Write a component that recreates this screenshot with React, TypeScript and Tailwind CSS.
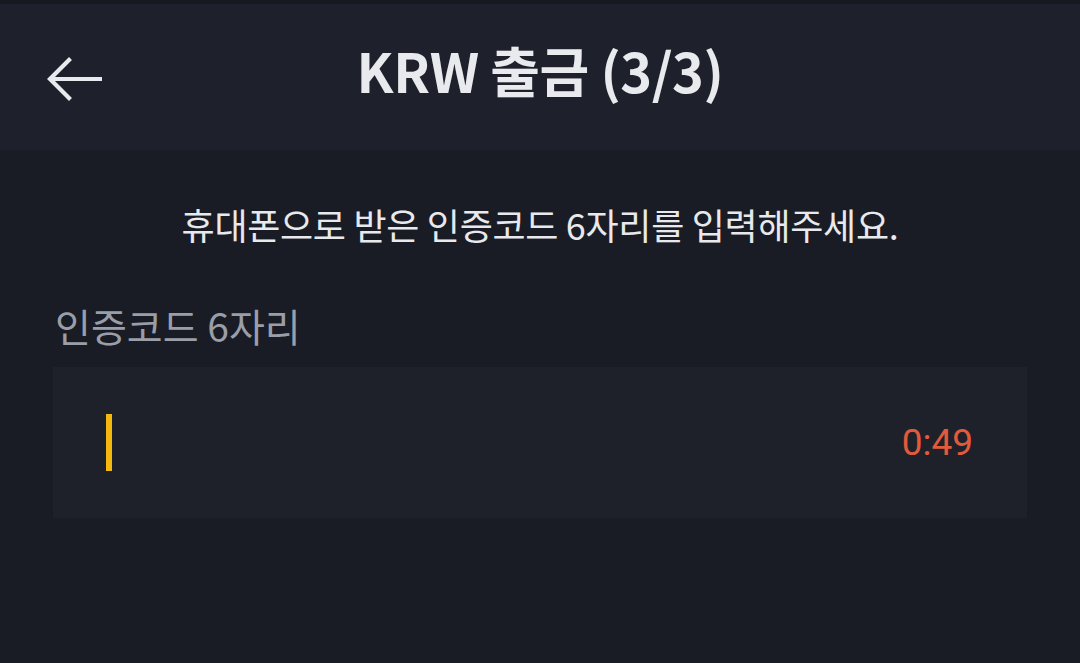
export default function App() {
  return (
    <div
      className="w-[1080px] h-[663px] bg-[#191c24] flex flex-col overflow-hidden"
      style={{ fontFamily: '"Noto Sans CJK KR", "Noto Sans", sans-serif' }}
    >
      {/* status strip */}
      <div className="h-[4px] bg-[#161920]" />

      {/* header */}
      <div className="relative h-[146px] bg-[#1e212b] flex items-center justify-center">
        <button className="absolute left-[46px] top-[50px] w-[56px] h-[50px] flex items-center justify-center">
          <svg width="56" height="46" viewBox="0 0 56 46" fill="none">
            <path
              d="M54 23H5M23 4L4 23L23 42"
              stroke="#e9eaee"
              strokeWidth="4.2"
              strokeLinecap="square"
              strokeLinejoin="miter"
            />
          </svg>
        </button>
        <h1 className="pb-[14px] text-[54px] font-bold text-[#e9eaee] tracking-[-0.5px] leading-none">
          KRW 출금 (3/3)
        </h1>
      </div>

      {/* body */}
      <div className="flex flex-col px-[53px]">
        <p className="mt-[50px] text-center text-[36px] text-[#e8e9ec] leading-[48px] tracking-[-0.3px]">
          휴대폰으로 받은 인증코드 6자리를 입력해주세요.
        </p>

        <label className="mt-[50px] pl-[2px] text-[39px] text-[#9a9ea8] leading-[54px]">
          인증코드 6자리
        </label>

        <div className="mt-[15px] h-[151px] bg-[#1e212a] flex items-center justify-between pl-[53px] pr-[54px]">
          <div className="w-[6px] h-[57px] bg-[#f5b80f]" />
          <span
            className="text-[37px] text-[#e35a3b] leading-none"
            style={{ fontFamily: 'Roboto, "Noto Sans", sans-serif' }}
          >
            0:49
          </span>
        </div>
      </div>
    </div>
  )
}
